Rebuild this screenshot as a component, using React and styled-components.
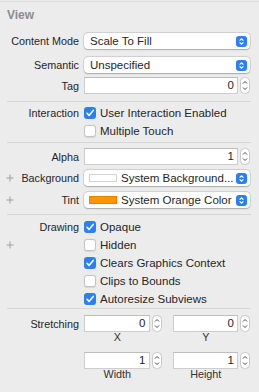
import React from "react";
import styled, { createGlobalStyle } from "styled-components";

const GlobalStyle = createGlobalStyle`
  html, body {
    margin: 0;
    padding: 0;
    background: #ececec;
  }
  body {
    font-family: "Liberation Sans", Arial, sans-serif;
    color: #262626;
    -webkit-font-smoothing: antialiased;
  }
`;

const Inspector = styled.div`
  width: 259px;
  height: 392px;
  padding-top: 1px;
  box-sizing: border-box;
  background: #ececec;
`;

const TopLine = styled.div`
  height: 1px;
  background: #dcdcdc;
`;

const Header = styled.div`
  padding: 6px 0 0 7px;
  height: 14px;
  line-height: 14px;
  font-size: 12px;
  font-weight: bold;
  color: #8b8b8b;
  margin-bottom: 11px;
`;

const Section = styled.div`
  padding-top: ${(p) => p.$top || 0}px;
  padding-bottom: ${(p) => p.$bottom || 0}px;
`;

const Divider = styled.div`
  height: 1px;
  background: #d6d6d6;
  margin: 0 8px 0 7px;
`;

const Row = styled.div`
  display: grid;
  grid-template-columns: 79px 1fr;
  column-gap: 5px;
  align-items: center;
  padding-right: 9px;
  height: ${(p) => p.$h || 14}px;
  margin-top: ${(p) => p.$mt || 0}px;
`;

const Label = styled.div`
  display: flex;
  align-items: center;
  justify-content: space-between;
  padding-left: 6px;
  font-size: 10.8px;
  color: #262626;
  white-space: nowrap;
`;

const LabelText = styled.span`
  margin-left: auto;
`;

const Popup = styled.div`
  height: 16px;
  display: flex;
  align-items: center;
  background: #fff;
  border-radius: 4px;
  box-shadow: 0 0 0 0.5px rgba(0, 0, 0, 0.16), 0 0.5px 1.5px rgba(0, 0, 0, 0.22);
  padding: 0 3px 0 6px;
  font-size: 11.5px;
  color: #262626;
  white-space: nowrap;
`;

const PopupText = styled.span`
  flex: 1;
  overflow: hidden;
`;

const Swatch = styled.span`
  width: 28px;
  height: 8px;
  box-sizing: border-box;
  margin: 0 4px 0 -1px;
  flex: none;
  background: ${(p) => p.$color};
  border: 1px solid ${(p) => p.$border};
`;

const FieldGroup = styled.div`
  display: flex;
  align-items: center;
  gap: 2px;
`;

const Field = styled.div`
  flex: 1;
  height: 17px;
  box-sizing: border-box;
  background: #fff;
  border: 1px solid #cdcdcd;
  border-top-color: #bdbdbd;
  font-size: 11.5px;
  line-height: 15px;
  text-align: right;
  padding-right: 3px;
  color: #262626;
`;

const Check = styled.div`
  display: flex;
  align-items: center;
  gap: 4px;
  font-size: 11.5px;
  color: #262626;
  white-space: nowrap;
`;

const Box = styled.span`
  width: 12px;
  height: 12px;
  box-sizing: border-box;
  border-radius: 3px;
  flex: none;
  display: flex;
  background: ${(p) => (p.$on ? "#2b7ff6" : "#fff")};
  border: ${(p) => (p.$on ? "none" : "1px solid #c4c4c4")};
  box-shadow: ${(p) => (p.$on ? "none" : "0 0.5px 1px rgba(0,0,0,0.1)")};
`;

const StretchGrid = styled.div`
  display: grid;
  grid-template-columns: 1fr 1fr;
  column-gap: 11px;
`;

const StretchCell = styled.div`
  display: flex;
  flex-direction: column;
`;

const Caption = styled.div`
  font-size: 10.8px;
  line-height: 11px;
  color: #333;
  text-align: center;
  padding-right: 11px;
`;

const StretchBlock = styled.div`
  display: grid;
  grid-template-columns: 79px 1fr;
  column-gap: 5px;
  padding-right: 9px;
  margin-top: ${(p) => p.$mt || 0}px;
`;

const StretchLabel = styled(Label)`
  height: 17px;
`;

const Plus = () => (
  <svg width="8" height="8" viewBox="0 0 8 8">
    <path d="M4 0.5V7.5M0.5 4H7.5" stroke="#a0a0a0" strokeWidth="1" />
  </svg>
);

const Stepper = () => (
  <svg width="10" height="17" viewBox="0 0 10 17" style={{ flex: "none" }}>
    <rect x="0.5" y="0.5" width="9" height="16" rx="4" fill="#fff" stroke="#c8c8c8" />
    <path d="M3 6.5L5 4.5L7 6.5" fill="none" stroke="#4a4a4a" strokeWidth="1" />
    <path d="M3 10.5L5 12.5L7 10.5" fill="none" stroke="#4a4a4a" strokeWidth="1" />
  </svg>
);

const PopupArrows = () => (
  <svg width="11" height="11" viewBox="0 0 11 11" style={{ flex: "none" }}>
    <rect width="11" height="11" rx="3" fill="#2b7ff6" />
    <path d="M3.6 4.6L5.5 2.8L7.4 4.6" fill="none" stroke="#fff" strokeWidth="1.2" />
    <path d="M3.6 6.4L5.5 8.2L7.4 6.4" fill="none" stroke="#fff" strokeWidth="1.2" />
  </svg>
);

const Tick = () => (
  <svg width="12" height="12" viewBox="0 0 12 12">
    <path d="M3 6.3L5 8.4L9.2 3.4" fill="none" stroke="#fff" strokeWidth="1.6" strokeLinecap="round" strokeLinejoin="round" />
  </svg>
);

const CheckItem = ({ on, children }) => (
  <Check>
    <Box $on={on}>{on && <Tick />}</Box>
    {children}
  </Check>
);

const NumberField = ({ value }) => (
  <FieldGroup>
    <Field>{value}</Field>
    <Stepper />
  </FieldGroup>
);

const SelectBox = ({ swatch, border, children }) => (
  <Popup>
    {swatch && <Swatch $color={swatch} $border={border} />}
    <PopupText>{children}</PopupText>
    <PopupArrows />
  </Popup>
);

const FieldLabel = ({ plus, children }) => (
  <Label>
    {plus && <Plus />}
    <LabelText>{children}</LabelText>
  </Label>
);

const drawingOptions = [
  { text: "Opaque", on: true },
  { text: "Hidden", on: false, plus: true },
  { text: "Clears Graphics Context", on: true },
  { text: "Clips to Bounds", on: false },
  { text: "Autoresize Subviews", on: true },
];

const StretchPair = ({ items, mt }) => (
  <StretchBlock $mt={mt}>
    <StretchLabel>{items.label && <LabelText>{items.label}</LabelText>}</StretchLabel>
    <StretchGrid>
      {items.fields.map((f) => (
        <StretchCell key={f.caption}>
          <NumberField value={f.value} />
          <Caption>{f.caption}</Caption>
        </StretchCell>
      ))}
    </StretchGrid>
  </StretchBlock>
);

export default function App() {
  return (
    <>
      <GlobalStyle />
      <Inspector>
        <TopLine />
        <Header>View</Header>
        <Section $bottom={7}>
          <Row $h={16}>
            <FieldLabel>Content Mode</FieldLabel>
            <SelectBox>Scale To Fill</SelectBox>
          </Row>
          <Row $h={16} $mt={8}>
            <FieldLabel>Semantic</FieldLabel>
            <SelectBox>Unspecified</SelectBox>
          </Row>
          <Row $h={17} $mt={4}>
            <FieldLabel>Tag</FieldLabel>
            <NumberField value="0" />
          </Row>
        </Section>
        <Divider />
        <Section $top={4} $bottom={4}>
          <Row>
            <FieldLabel>Interaction</FieldLabel>
            <CheckItem on>User Interaction Enabled</CheckItem>
          </Row>
          <Row $mt={4}>
            <FieldLabel />
            <CheckItem>Multiple Touch</CheckItem>
          </Row>
        </Section>
        <Divider />
        <Section $top={5} $bottom={6}>
          <Row $h={17}>
            <FieldLabel>Alpha</FieldLabel>
            <NumberField value="1" />
          </Row>
          <Row $h={16} $mt={5}>
            <FieldLabel plus>Background</FieldLabel>
            <SelectBox swatch="#ffffff" border="#d4d4d4">System Background...</SelectBox>
          </Row>
          <Row $h={16} $mt={6}>
            <FieldLabel plus>Tint</FieldLabel>
            <SelectBox swatch="#ff9500" border="#e08400">System Orange Color</SelectBox>
          </Row>
        </Section>
        <Divider />
        <Section $top={5} $bottom={2}>
          {drawingOptions.map((o, i) => (
            <Row key={o.text} $mt={i === 0 ? 0 : 4}>
              <FieldLabel plus={o.plus}>{i === 0 ? "Drawing" : ""}</FieldLabel>
              <CheckItem on={o.on}>{o.text}</CheckItem>
            </Row>
          ))}
        </Section>
        <Divider />
        <Section $top={6}>
          <StretchPair
            items={{
              label: "Stretching",
              fields: [
                { value: "0", caption: "X" },
                { value: "0", caption: "Y" },
              ],
            }}
          />
          <StretchPair
            mt={9}
            items={{
              fields: [
                { value: "1", caption: "Width" },
                { value: "1", caption: "Height" },
              ],
            }}
          />
        </Section>
      </Inspector>
    </>
  );
}
